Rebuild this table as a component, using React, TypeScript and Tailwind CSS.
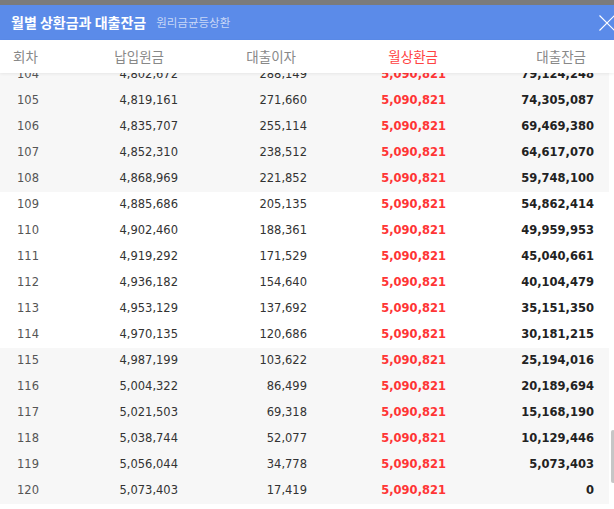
import React from 'react';

type Row = [number, string, string, string];

const rows: Row[] = [
  [104, '4,802,672', '288,149', '79,124,248'],
  [105, '4,819,161', '271,660', '74,305,087'],
  [106, '4,835,707', '255,114', '69,469,380'],
  [107, '4,852,310', '238,512', '64,617,070'],
  [108, '4,868,969', '221,852', '59,748,100'],
  [109, '4,885,686', '205,135', '54,862,414'],
  [110, '4,902,460', '188,361', '49,959,953'],
  [111, '4,919,292', '171,529', '45,040,661'],
  [112, '4,936,182', '154,640', '40,104,479'],
  [113, '4,953,129', '137,692', '35,151,350'],
  [114, '4,970,135', '120,686', '30,181,215'],
  [115, '4,987,199', '103,622', '25,194,016'],
  [116, '5,004,322', '86,499', '20,189,694'],
  [117, '5,021,503', '69,318', '15,168,190'],
  [118, '5,038,744', '52,077', '10,129,446'],
  [119, '5,056,044', '34,778', '5,073,403'],
  [120, '5,073,403', '17,419', '0'],
];

const kr = "font-['Noto_Sans_CJK_KR','Noto_Sans',sans-serif]";
const num = "font-['DejaVu_Sans',sans-serif]";
const cols = 'grid grid-cols-[60px_118px_129px_139px_148px]';

export default function App() {
  return (
    <div className="w-[614px] h-[509px] overflow-hidden bg-white relative">
      {/* dimmed page behind the modal */}
      <div className="h-[5px] bg-[#7b7b7b]" />

      {/* modal title bar */}
      <div className={`h-[35px] bg-[#5b8be9] flex items-center pl-[11px] relative ${kr}`}>
        <span className="text-white font-bold text-[14px]">월별 상환금과 대출잔금</span>
        <span className="ml-[10px] text-[#c9d8f7] text-[11.5px]">원리금균등상환</span>
        <svg className="absolute left-[599px] top-[10px]" width="16" height="16" viewBox="0 0 16 16">
          <path d="M0.5 0.5 L15.5 15.5 M15.5 0.5 L0.5 15.5" stroke="white" strokeWidth="1.1" fill="none" />
        </svg>
      </div>

      {/* column headers */}
      <div
        className={`${cols} h-[33px] items-center bg-white relative z-10 shadow-[0_1px_3px_rgba(0,0,0,0.07)] text-[13.5px] text-[#888] ${kr}`}
      >
        <div className="pl-[13px]">회차</div>
        <div className="text-right pr-[14px]">납입원금</div>
        <div className="text-right pr-[11px]">대출이자</div>
        <div className="text-right pr-[8px] text-[#ff4343]">월상환금</div>
        <div className="text-right pr-[8px]">대출잔금</div>
      </div>

      {/* scrolling body */}
      <div className="h-[436px] overflow-hidden relative">
        <div className="mt-[-11px] w-[609px]">
          {rows.map(([n, principal, interest, balance]) => (
            <div
              key={n}
              className={`${cols} h-[26px] items-center text-[11.5px] ${num} ${
                Math.floor((n - 1) / 6) % 2 === 1 ? 'bg-[#f7f7f7]' : 'bg-white'
              }`}
            >
              <div className="pl-[17px] text-[#555]">{n}</div>
              <div className="text-right text-[#333]">{principal}</div>
              <div className="text-right text-[#333]">{interest}</div>
              <div className="text-right font-bold text-[#ff3535]">5,090,821</div>
              <div className="text-right font-bold text-[#222]">{balance}</div>
            </div>
          ))}
        </div>
        {/* scrollbar thumb */}
        <div className="absolute left-[611px] top-[357px] w-[4px] h-[53px] bg-[#c6c6c6] rounded-[2px]" />
      </div>
    </div>
  );
}
